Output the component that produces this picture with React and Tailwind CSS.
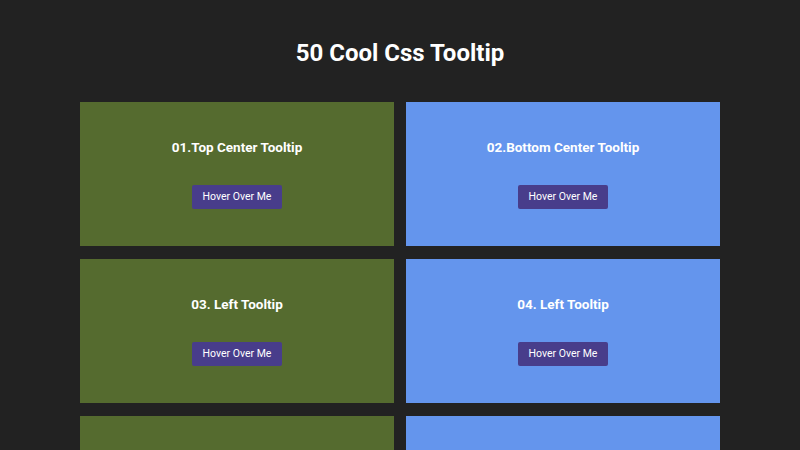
const tooltips = [
  { title: '01.Top Center Tooltip', color: 'bg-[#556b2f]' },
  { title: '02.Bottom Center Tooltip', color: 'bg-[#6495ed]' },
  { title: '03. Left Tooltip', color: 'bg-[#556b2f]' },
  { title: '04. Left Tooltip', color: 'bg-[#6495ed]' },
  { title: '05. Right Tooltip', color: 'bg-[#556b2f]' },
  { title: '06. Right Tooltip', color: 'bg-[#6495ed]' },
];

function App() {
  return (
    <div className="min-h-screen bg-[#222222] text-white font-['Roboto',sans-serif]">
      <h1 className="pt-[37px] pb-[33px] text-center text-[24px] leading-[32px] font-bold">
        50 Cool Css Tooltip
      </h1>

      <div className="mx-auto w-[640px] grid grid-cols-2 gap-x-[12px] gap-y-[13px] pb-10">
        {tooltips.map((t, i) => (
          <div
            key={i}
            className={`${t.color} h-[144px] flex flex-col items-center pt-[36px]`}
          >
            <h3 className="text-[13.5px] leading-[18px] font-bold">{t.title}</h3>
            <button className="mt-[29px] h-[24px] px-[11px] bg-[#483d8b] rounded-[2px] text-[10.5px] text-white">
              Hover Over Me
            </button>
          </div>
        ))}
      </div>
    </div>
  );
}

export default App;
